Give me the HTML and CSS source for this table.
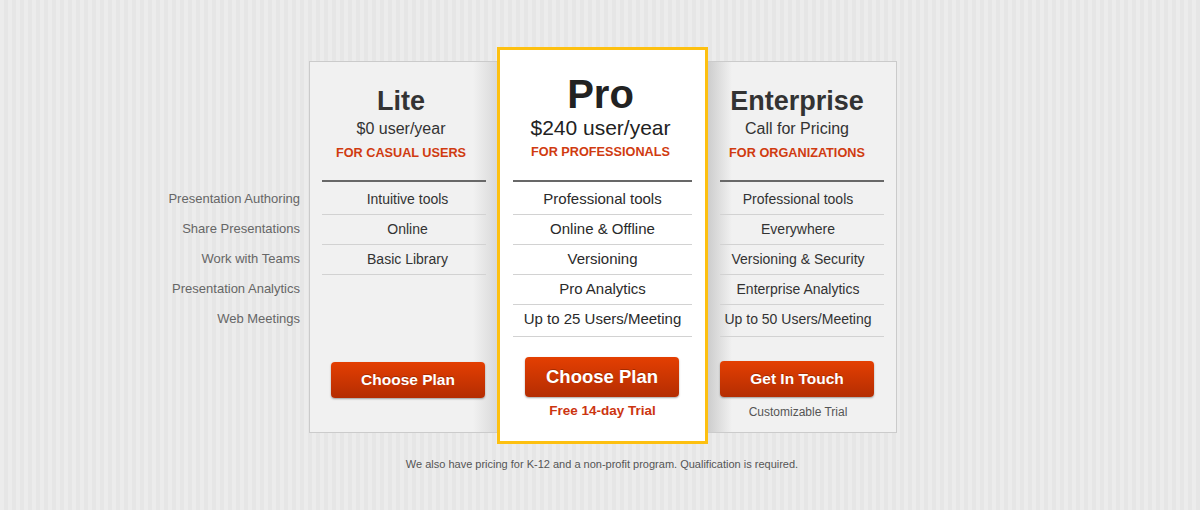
FILE: index.html
```html
<!DOCTYPE html>
<html lang="en">
<head>
<meta charset="utf-8">
<title>Pricing</title>
<link rel="stylesheet" href="styles.css">
</head>
<body>
<div class="page">
  <div class="pricing">
    <ul class="labels">
      <li>Presentation Authoring</li>
      <li>Share Presentations</li>
      <li>Work with Teams</li>
      <li>Presentation Analytics</li>
      <li>Web Meetings</li>
    </ul>

    <div class="plan plan-lite">
      <div class="plan-head">
        <h2 class="plan-name">Lite</h2>
        <p class="plan-price">$0 user/year</p>
        <p class="plan-tag">FOR CASUAL USERS</p>
      </div>
      <ul class="plan-feats">
        <li>Intuitive tools</li>
        <li>Online</li>
        <li>Basic Library</li>
      </ul>
      <a class="btn" href="#">Choose Plan</a>
    </div>

    <div class="plan plan-pro">
      <div class="plan-head">
        <h2 class="plan-name">Pro</h2>
        <p class="plan-price">$240 user/year</p>
        <p class="plan-tag">FOR PROFESSIONALS</p>
      </div>
      <ul class="plan-feats">
        <li>Professional tools</li>
        <li>Online &amp; Offline</li>
        <li>Versioning</li>
        <li>Pro Analytics</li>
        <li>Up to 25 Users/Meeting</li>
      </ul>
      <a class="btn" href="#">Choose Plan</a>
      <p class="plan-sub">Free 14-day Trial</p>
    </div>

    <div class="plan plan-ent">
      <div class="plan-head">
        <h2 class="plan-name">Enterprise</h2>
        <p class="plan-price">Call for Pricing</p>
        <p class="plan-tag">FOR ORGANIZATIONS</p>
      </div>
      <ul class="plan-feats">
        <li>Professional tools</li>
        <li>Everywhere</li>
        <li>Versioning &amp; Security</li>
        <li>Enterprise Analytics</li>
        <li>Up to 50 Users/Meeting</li>
      </ul>
      <a class="btn" href="#">Get In Touch</a>
      <p class="plan-sub">Customizable Trial</p>
    </div>
  </div>
  <p class="note">We also have pricing for K-12 and a non-profit program. Qualification is required.</p>
</div>
</body>
</html>
```

FILE: styles.css
```css
* {
  box-sizing: border-box;
}

html, body {
  margin: 0;
  padding: 0;
}

body {
  width: 1200px;
  height: 510px;
  overflow: hidden;
  font-family: "Liberation Sans", Arial, sans-serif;
  color: #333;
  background: repeating-linear-gradient(90deg, #ececec 0 4px, #e6e6e6 4px 8px);
}

.page {
  padding-top: 47px;
}

.pricing {
  display: flex;
  align-items: flex-start;
}

ul {
  list-style: none;
  margin: 0;
  padding: 0;
}

p, h2 {
  margin: 0;
}

/* feature labels */
.labels {
  width: 300px;
  margin-top: 137px;
  text-align: right;
  font-size: 13px;
  line-height: 30px;
  color: #666;
}

/* plan cards */
.plan {
  display: flex;
  flex-direction: column;
}

.plan-lite,
.plan-ent {
  height: 372px;
  margin-top: 14px;
  border: 1px solid #cbcbcb;
}

.plan-lite {
  width: 188px;
  margin-left: 9px;
  padding: 0 11px 0 12px;
  border-right: none;
  background: linear-gradient(to right, #f1f1f1 calc(100% - 24px), #d9d9d9 100%);
}

.plan-ent {
  width: 189px;
  padding: 0 12px;
  border-left: none;
  background: linear-gradient(to left, #f1f1f1 calc(100% - 24px), #cdcdcd 100%);
}

.plan-pro {
  position: relative;
  z-index: 1;
  width: 211px;
  height: 397px;
  padding: 0 13px;
  border: 3px solid #fdc010;
  background: #fff;
}

/* header */
.plan-head {
  height: 118px;
  padding-top: 24px;
  text-align: center;
}

.plan-name {
  font-size: 27px;
  line-height: 30px;
  font-weight: bold;
  color: #333;
}

.plan-price {
  margin-top: 3px;
  font-size: 16px;
  line-height: 20px;
  color: #333;
}

.plan-tag {
  margin-top: 5px;
  font-size: 12.7px;
  line-height: 18px;
  font-weight: bold;
  color: #d03b10;
}

.plan-pro .plan-head {
  height: 130px;
  padding-top: 22px;
  padding-right: 4px;
}

.plan-pro .plan-name {
  font-size: 40px;
  line-height: 44px;
  color: #222;
}

.plan-pro .plan-price {
  margin-top: 0;
  font-size: 21px;
  line-height: 24px;
  color: #222;
}

.plan-pro .plan-tag {
  margin-top: 3px;
}

.plan-lite .plan-head {
  padding-right: 6px;
}

.plan-ent .plan-head {
  padding-right: 10px;
}

/* features */
.plan-feats {
  height: 157px;
  padding-top: 3px;
  border-top: 2px solid #686868;
}

.plan-feats li {
  height: 30px;
  line-height: 28px;
  border-bottom: 1px solid #d2d2d2;
  text-align: center;
  font-size: 14px;
  color: #333;
}

.plan-feats li:nth-child(5) {
  height: 32px;
}

.plan-lite .plan-feats li {
  padding-left: 7px;
}

.plan-ent .plan-feats li {
  padding-right: 8px;
}

.plan-pro .plan-feats li {
  font-size: 15px;
  color: #2a2a2a;
}

/* buttons */
.btn {
  display: block;
  width: 154px;
  height: 36px;
  line-height: 36px;
  border-radius: 4px;
  background: linear-gradient(#e43f02, #b42d02);
  box-shadow: 0 1px 2px rgba(0, 0, 0, 0.35);
  color: #fff;
  text-align: center;
  text-decoration: none;
  font-size: 15.5px;
  font-weight: bold;
  text-shadow: 0 -1px 0 rgba(90, 20, 0, 0.4);
}

.plan-lite .btn {
  margin: 25px 0 0 9px;
}

.plan-pro .btn {
  height: 40px;
  line-height: 40px;
  margin: 20px 0 0 12px;
  font-size: 18.5px;
}

.plan-ent .btn {
  margin-top: 24px;
}

.plan-sub {
  text-align: center;
}

.plan-pro .plan-sub {
  margin-top: 5px;
  font-size: 13.5px;
  line-height: 18px;
  font-weight: bold;
  color: #cc3510;
}

.plan-ent .plan-sub {
  margin-top: 7px;
  padding-right: 8px;
  font-size: 12px;
  line-height: 16px;
  color: #555;
}

/* footnote */
.note {
  margin-top: 13px;
  padding-left: 4px;
  text-align: center;
  font-size: 11px;
  line-height: 14px;
  color: #555;
}
```
